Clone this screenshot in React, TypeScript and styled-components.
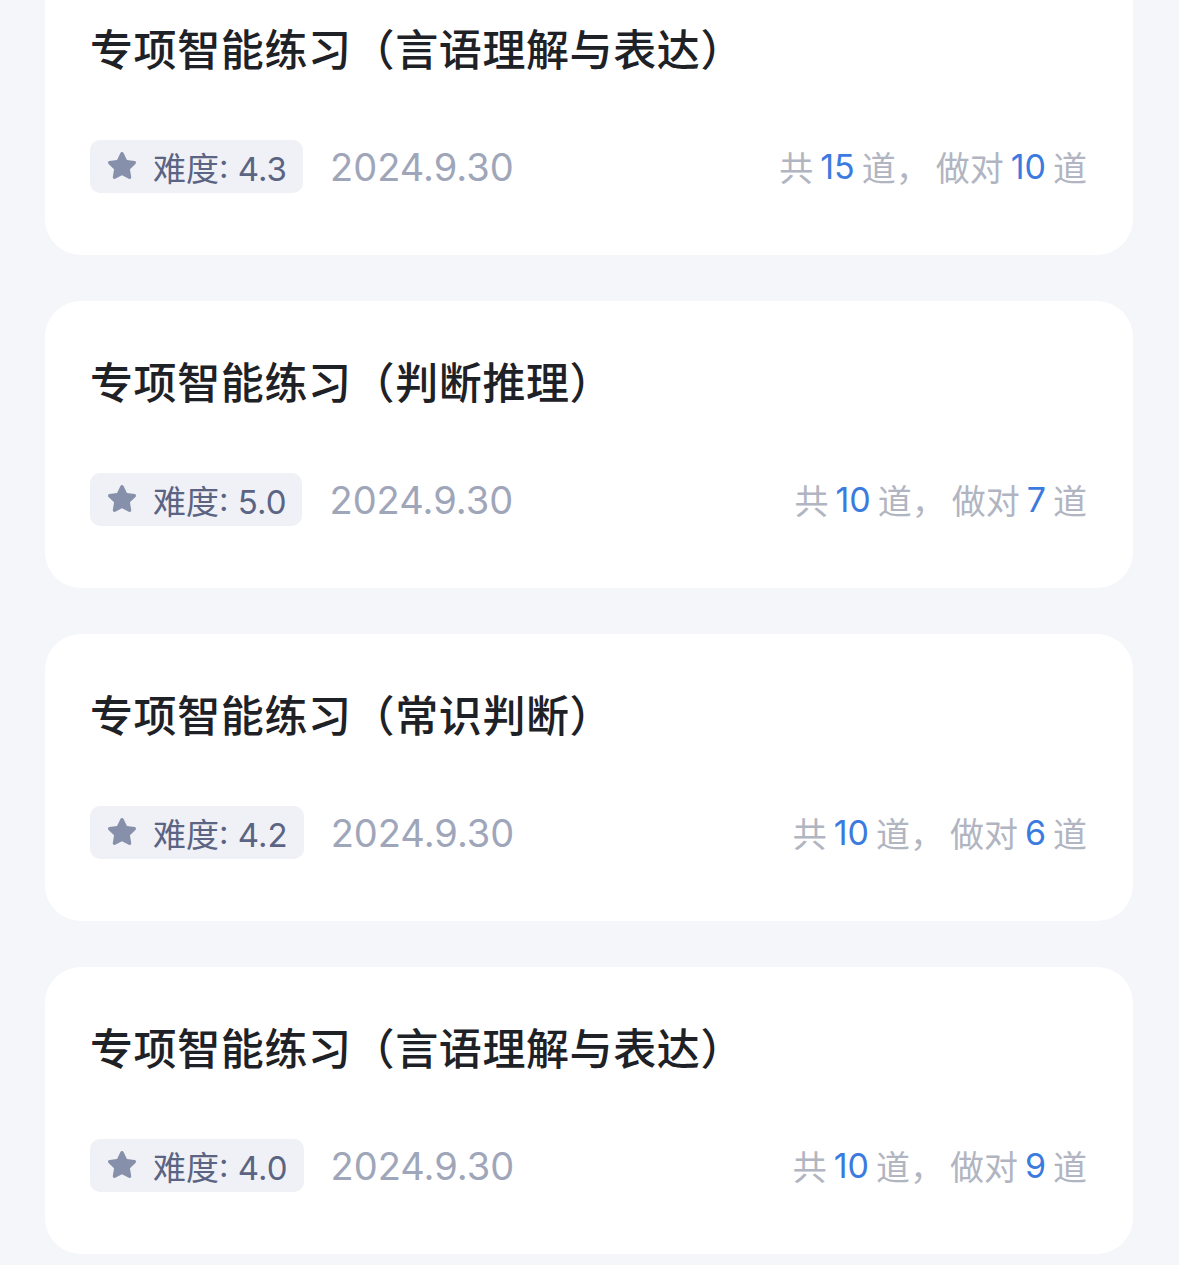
import React from "react";
import styled, { createGlobalStyle } from "styled-components";

const GlobalStyle = createGlobalStyle`
  html, body {
    margin: 0;
    padding: 0;
    background: #f5f6fa;
  }
  body {
    font-family: "Inter", "Noto Sans CJK SC", sans-serif;
    overflow: hidden;
  }
`;

const Page = styled.div`
  width: 1179px;
  height: 1265px;
  overflow: hidden;
  background: #f5f6fa;
  padding: 0 46px 0 45px;
  box-sizing: border-box;
`;

const List = styled.div`
  display: flex;
  flex-direction: column;
  gap: 46px;
  margin-top: -32px;
`;

const Card = styled.div`
  background: #ffffff;
  border-radius: 36px;
  height: 287px;
  box-sizing: border-box;
  padding: 49px 46px 0 45px;
  display: flex;
  flex-direction: column;
`;

const Title = styled.div`
  font-family: "Noto Sans CJK SC", sans-serif;
  font-size: 43px;
  line-height: 60px;
  font-weight: 500;
  color: #1e2126;
  letter-spacing: 0.6px;
`;

const Meta = styled.div`
  margin-top: 63px;
  display: flex;
  align-items: center;
  height: 53px;
`;

const Tag = styled.div`
  display: flex;
  align-items: center;
  height: 53px;
  box-sizing: border-box;
  padding: 0 16px 0 15px;
  background: #f0f1f6;
  border-radius: 10px;
  gap: 14px;
  color: #5b6483;
  font-size: 33px;
  font-family: "Inter", "Noto Sans CJK SC", sans-serif;
`;

const DateText = styled.span`
  margin-left: 27px;
  font-size: 38px;
  color: #a0a6ba;
  font-family: "Inter", sans-serif;
`;

const Stats = styled.div`
  margin-left: auto;
  font-size: 34px;
  color: #b1b5c1;
  display: flex;
  align-items: center;
  font-family: "Inter", "Noto Sans CJK SC", sans-serif;
`;

const Num = styled.span`
  color: #3b7be0;
  margin: 0 7px;
  font-family: "Inter", sans-serif;
`;

const Comma = styled.span`
  width: 40px;
`;

const Star = () => (
  <svg width="34" height="33" viewBox="0 0 24 23">
    <path
      d="M12 1.2c.5 0 .9.3 1.1.7l2.4 5 5.4.8c1 .1 1.3 1.3.6 2l-3.9 3.8.9 5.4c.2 1-.8 1.7-1.7 1.2L12 17.6l-4.8 2.5c-.9.5-1.9-.3-1.7-1.2l.9-5.4-3.9-3.8c-.7-.7-.3-1.9.6-2l5.4-.8 2.4-5c.2-.4.6-.7 1.1-.7z"
      fill="#8790ab"
    />
  </svg>
);

type Item = {
  title: string;
  diff: string;
  date: string;
  total: number;
  right: number;
};

const items: Item[] = [
  { title: "专项智能练习（言语理解与表达）", diff: "4.3", date: "2024.9.30", total: 15, right: 10 },
  { title: "专项智能练习（判断推理）", diff: "5.0", date: "2024.9.30", total: 10, right: 7 },
  { title: "专项智能练习（常识判断）", diff: "4.2", date: "2024.9.30", total: 10, right: 6 },
  { title: "专项智能练习（言语理解与表达）", diff: "4.0", date: "2024.9.30", total: 10, right: 9 },
];

export default function App() {
  return (
    <>
      <GlobalStyle />
      <Page>
        <List>
          {items.map((it, i) => (
            <Card key={i}>
              <Title>{it.title}</Title>
              <Meta>
                <Tag>
                  <Star />
                  <span>难度: {it.diff}</span>
                </Tag>
                <DateText>{it.date}</DateText>
                <Stats>
                  <span>共</span>
                  <Num>{it.total}</Num>
                  <span>道</span>
                  <Comma>，</Comma>
                  <span>做对</span>
                  <Num>{it.right}</Num>
                  <span>道</span>
                </Stats>
              </Meta>
            </Card>
          ))}
        </List>
      </Page>
    </>
  );
}
